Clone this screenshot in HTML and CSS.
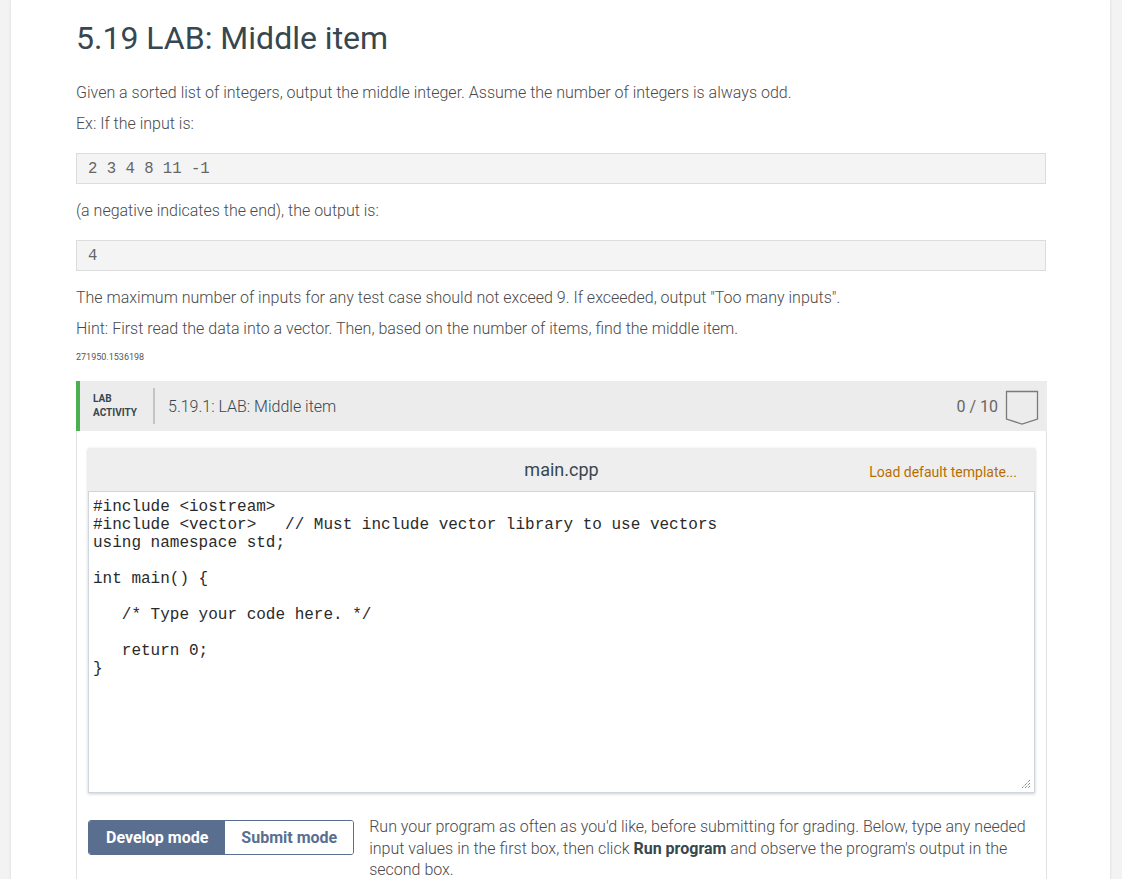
FILE: index.html
```html
<!DOCTYPE html>
<html>
<head>
<meta charset="utf-8">
<link rel="stylesheet" href="styles.css">
</head>
<body>
<div class="page">
  <h1 class="title">5.19 LAB: Middle item</h1>
  <p class="txt">Given a sorted list of integers, output the middle integer. Assume the number of integers is always odd.</p>
  <p class="txt">Ex: If the input is:</p>
  <div class="pre">2 3 4 8 11 -1</div>
  <p class="txt">(a negative indicates the end), the output is:</p>
  <div class="pre">4</div>
  <p class="txt">The maximum number of inputs for any test case should not exceed 9. If exceeded, output "Too many inputs".</p>
  <p class="txt">Hint: First read the data into a vector. Then, based on the number of items, find the middle item.</p>
  <div class="ident">271950.1536198</div>

  <div class="lab">
    <div class="lab-head">
      <div class="lab-label">LAB<br>ACTIVITY</div>
      <div class="lab-sep"></div>
      <div class="lab-title">5.19.1: LAB: Middle item</div>
      <div class="lab-score">0 / 10</div>
      <svg class="badge" width="34" height="36" viewBox="0 0 34 36"><path d="M1.5 1.5 H32.5 V29 L17 34 L1.5 29 Z" fill="none" stroke="#7a7a7a" stroke-width="1.3"/></svg>
    </div>
    <div class="lab-body">
      <div class="editor">
        <div class="ed-head">
          <div class="ed-name">main.cpp</div>
          <div class="ed-load">Load default template...</div>
        </div>
        <div class="ed-area"><pre class="code">#include &lt;iostream&gt;
#include &lt;vector&gt;   // Must include vector library to use vectors
using namespace std;

int main() {

   /* Type your code here. */

   return 0;
}</pre>
          <svg class="grip" width="10" height="10" viewBox="0 0 10 10"><path d="M9 1 L1 9 M9 4 L4 9 M9 7 L7 9" stroke="#555" stroke-width="1" stroke-dasharray="1 1"/></svg>
        </div>
      </div>
      <div class="run-row">
        <div class="modes">
          <div class="mode active">Develop mode</div>
          <div class="mode">Submit mode</div>
        </div>
        <p class="run-desc">Run your program as often as you'd like, before submitting for grading. Below, type any needed input values in the first box, then click <b>Run program</b> and observe the program's output in the second box.</p>
      </div>
    </div>
  </div>
</div>
</body>
</html>
```
FILE: styles.css
```css
html, body { margin: 0; padding: 0; }
body {
  background: #f3f3f3;
  font-family: Roboto, "Liberation Sans", sans-serif;
  height: 879px;
  overflow: hidden;
}
.page {
  margin-left: 11px;
  width: 970px;
  background: #fff;
  box-shadow: 0 0 3px rgba(0,0,0,0.12);
  padding: 18px 64px 40px 65px;
  min-height: 900px;
}
.title {
  margin: 0 0 25px;
  font-size: 32px;
  line-height: 40px;
  font-weight: 400;
  color: #37474f;
}
.txt {
  margin: 0 0 11px;
  font-size: 16px;
  line-height: 20px;
  font-weight: 300;
  color: #4a4a4a;
}
.pre {
  margin: 19px 0 17px;
  height: 29px;
  line-height: 30px;
  background: #f4f4f4;
  border: 1px solid #dcdcdc;
  padding: 0 11px;
  font-family: "Liberation Mono", monospace;
  font-size: 15.6px;
  color: #666;
  white-space: pre;
  font-weight: 300;
}
.ident {
  font-size: 9px;
  line-height: 14px;
  color: #555;
  font-weight: 400;
  margin-top: 8px;
}
.lab {
  margin-top: 17px;
  width: 971px;
}
.lab-head {
  display: flex;
  align-items: center;
  height: 50px;
  background: #ececec;
  border-left: 4px solid #4caf50;
  padding: 0 8px 0 13px;
}
.lab-label {
  font-size: 10px;
  line-height: 14px;
  font-weight: 700;
  color: #37474f;
  width: 60px;
}
.lab-sep {
  width: 2px;
  height: 36px;
  background: #c4c4c4;
  margin: 0 13px 0 0;
}
.lab-title {
  flex: 1;
  font-size: 16px;
  font-weight: 300;
  color: #37474f;
}
.lab-score {
  font-size: 16px;
  font-weight: 400;
  color: #666;
  margin-right: 7px;
}
.badge { display: block; margin-top: 3px; }
.lab-body {
  border-left: 1px solid #e2e2e2;
  border-right: 1px solid #e2e2e2;
  padding: 17px 11px 0 11px;
}
.editor {
  box-shadow: 0 1px 3px rgba(0,0,0,0.2);
}
.ed-head {
  position: relative;
  height: 43px;
  background: #eeeeee;
  display: flex;
  align-items: center;
  justify-content: center;
}
.ed-name {
  font-size: 18px;
  color: #37474f;
  font-weight: 400;
}
.ed-load {
  position: absolute;
  right: 18px;
  top: 16px;
  font-size: 14px;
  color: #b86e00;
}
.ed-area {
  position: relative;
  height: 300px;
  border: 1px solid #cfd6de;
  background: #fff;
}
.code {
  margin: 0;
  padding: 6px 4px 4px;
  font-family: "Liberation Mono", monospace;
  font-size: 16px;
  line-height: 18px;
  color: #2a2a2a;
  font-weight: 300;
}
.grip {
  position: absolute;
  right: 3px;
  bottom: 3px;
}
.run-row {
  display: flex;
  align-items: flex-start;
  margin-top: 27px;
}
.modes {
  display: flex;
  margin-top: 0;
  border: 1px solid #5a6f8f;
  border-radius: 3px;
  overflow: hidden;
  flex: none;
}
.mode {
  height: 33px;
  line-height: 33px;
  padding: 0 16px;
  font-size: 16px;
  font-weight: 700;
  color: #5a6f8f;
  background: #fff;
}
.mode.active {
  background: #5a6f8f;
  color: #fff;
  padding: 0 17px;
}
.run-desc {
  margin: -4px 0 0 15px;
  font-size: 16px;
  line-height: 21.5px;
  font-weight: 300;
  color: #4a4a4a;
}
.run-desc b { font-weight: 700; color: #37474f; }
```
